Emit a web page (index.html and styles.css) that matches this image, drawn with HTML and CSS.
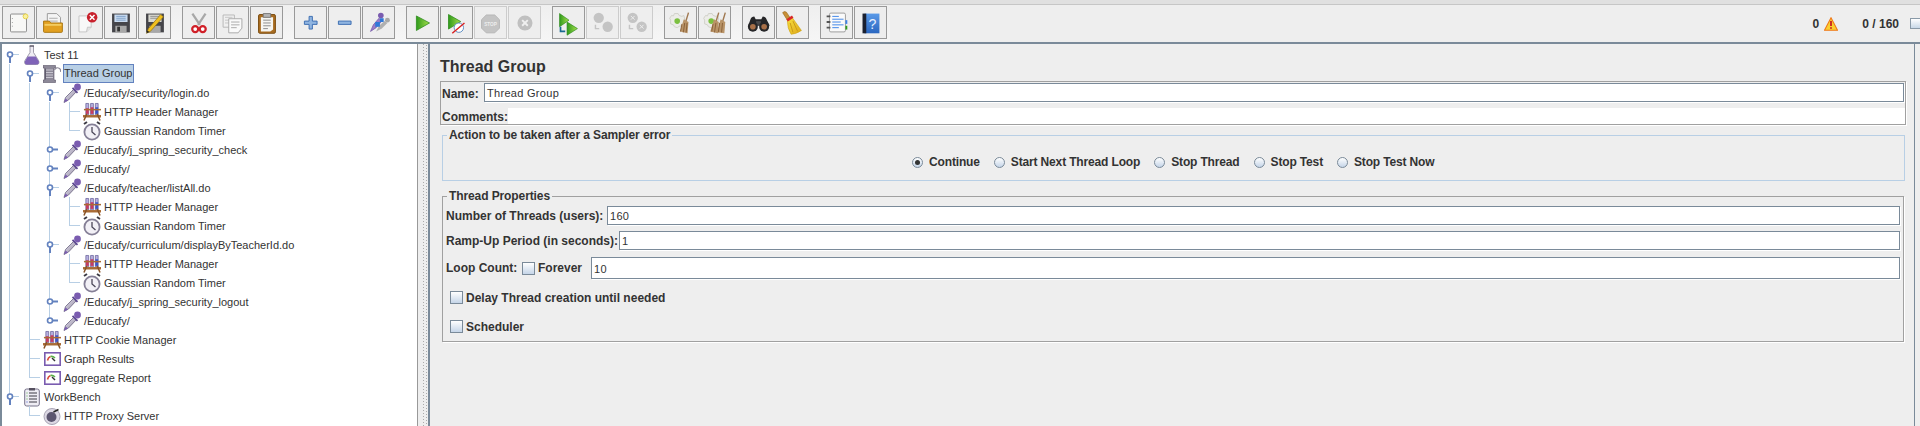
FILE: index.html
```html
<!DOCTYPE html>
<html lang="en">

<head>
    <meta charset="UTF-8">
    <title>Apache JMeter - Thread Group</title>
    <link rel="stylesheet" href="styles.css">
</head>

<body>

    <svg class="defs" width="0" height="0">
        <defs>
            <linearGradient id="glass" x1="0" y1="0" x2="1" y2="1">
                <stop offset="0" stop-color="#e8e4f0" />
                <stop offset="1" stop-color="#8f88a0" />
            </linearGradient>
            <linearGradient id="go" x1="0" y1="0" x2="1" y2="0">
                <stop offset="0" stop-color="#2f9a1c" />
                <stop offset="1" stop-color="#a8e04c" />
            </linearGradient>
            <linearGradient id="bluebook" x1="0" y1="0" x2="0" y2="1">
                <stop offset="0" stop-color="#5a9ae8" />
                <stop offset="1" stop-color="#2a66c0" />
            </linearGradient>
            <linearGradient id="straw" x1="0" y1="0" x2="1" y2="1">
                <stop offset="0" stop-color="#f6e040" />
                <stop offset="1" stop-color="#e0a818" />
            </linearGradient>
            <symbol id="h-open" viewBox="0 0 20 19">
                <path d="M10 12v6" stroke="#6382bf" stroke-width="2" />
                <path d="M13 9.500h6" stroke="#b8cfe5" />
                <circle cx="10" cy="9.500" r="2.500" fill="#fff" stroke="#6382bf" stroke-width="1.600" />
            </symbol>
            <symbol id="h-closed" viewBox="0 0 20 19">
                <path d="M13 9.500h5" stroke="#6382bf" stroke-width="2" />
                <circle cx="10" cy="9.500" r="2.500" fill="#fff" stroke="#6382bf" stroke-width="1.600" />
            </symbol>
            <symbol id="i-flask" viewBox="0 0 18 20">
                <path d="M7 1h3.500v6.500l5 8q1.500 4-2 4H4q-3.500 0-2-4l5-8z" fill="#efedf3" stroke="#8a8698" stroke-width=".8" />
                <path d="M4.800 11.500h7.900l3 4.800q.8 3.200-2 3.200H4q-2.800 0-2-3.200z" fill="#7f63b8" />
                <path d="M6.500 1h4.500" stroke="#55505f" stroke-width="1.200" />
            </symbol>
            <symbol id="i-spool" viewBox="0 0 18 20">
                <path d="M0 1.500h12.500v2.500H11v12h1.500v2.500H0V16h1.500V4H0z" fill="#8d8998" stroke="#5a5668" stroke-width=".6" />
                <path d="M2.500 6h7.500M2.500 8.500h7.500M2.500 11h7.500M2.500 13.500h7.500" stroke="#c8c6d0" />
                <path d="M2.500 4.500v11" stroke="#5f5b6c" />
                <path d="M11.500 6q2-3.500 5-1.500 1.500 1.200 1 3.500" fill="none" stroke="#8d8998" stroke-width="1.200" />
            </symbol>
            <symbol id="i-dropper" viewBox="0 0 18 20">
                <path d="M1 19.500l1.500-5L11 6l2.500 2.500-8 8.500z" fill="url(#glass)" stroke="#6b6480" stroke-width=".8" />
                <path d="M1 19.500l1.500-4 2.500 2z" fill="#7a5cb0" />
                <path d="M9.500 4.800l5 5" stroke="#5d4a90" stroke-width="1.800" />
                <circle cx="14.500" cy="4" r="3.400" fill="#7a5cb0" />
            </symbol>
            <symbol id="i-rack" viewBox="0 0 19 20">
                <path d="M3 1h3v12H3zM8 1h3v12H8zM13 1h3v12h-3z" fill="#b8b0e0" stroke="#5a5490" stroke-width=".7" />
                <path d="M3 6h3v6H3z" fill="#c83a60" />
                <path d="M8 5h3v7H8z" fill="#c83a60" />
                <path d="M13 5h3v7h-3z" fill="#3a56c8" />
                <path d="M1 7.500h18" stroke="#a96b35" stroke-width="1.600" />
                <path d="M0 14.500h19" stroke="#a96b35" stroke-width="2.600" />
                <path d="M4 12l-3 7M15 12l3 7" stroke="#8a5528" stroke-width="1.600" />
            </symbol>
            <symbol id="i-timer" viewBox="0 0 18 20">
                <path d="M1 3l3-2M17 3l-3-2" stroke="#3c3a44" stroke-width="2" />
                <circle cx="9" cy="11" r="7.600" fill="#f2f0f6" stroke="#857f96" stroke-width="1.800" />
                <path d="M9 6v5l3.500 3" fill="none" stroke="#4a4658" stroke-width="1.300" />
            </symbol>
            <symbol id="i-gauge" viewBox="0 0 18 20">
                <rect x="1.800" y="3.800" width="15.400" height="12.400" fill="#fff" stroke="#7a5cb0" stroke-width="1.600" />
                <path d="M4.500 11.500q.5-3 3-4" fill="none" stroke="#d84a3a" stroke-width="1.600" />
                <path d="M7.500 7.500q2.500-.5 4.500 1.500" fill="none" stroke="#5ab04a" stroke-width="1.600" />
                <path d="M9 9l3 3" stroke="#333" stroke-width="1.400" />
            </symbol>
            <symbol id="i-notes" viewBox="0 0 18 20">
                <rect x="1.700" y="2" width="14.600" height="17" rx="2" fill="#efedf4" stroke="#77728a" />
                <path d="M6 1h6v2.500H6z" fill="#55505f" />
                <path d="M6 6h8M6 9h8M6 12h8M6 15h8" stroke="#3c3a44" />
                <path d="M3.500 6h1M3.500 9h1M3.500 12h1" stroke="#5ab04a" />
                <path d="M3.500 15h1" stroke="#3a56c8" />
            </symbol>
            <symbol id="i-bomb" viewBox="0 0 18 20">
                <circle cx="9" cy="10.500" r="8" fill="#dcd8e4" stroke="#a8a4b4" />
                <circle cx="8.500" cy="11" r="5" fill="#5c5670" />
                <path d="M10.500 6l5-2.500" stroke="#222" stroke-width="1.500" />
            </symbol>
            <symbol id="i-gear" viewBox="0 0 33 33">
                <path d="M10 7h4l1 2 3 1 2-1 1 4-1 2 1 3-3 3-2-1-3 2-3-1-1-2-3-1v-4l-1-2 2-3 2 .5z" fill="#ecece8" stroke="#cfcfc8" />
                <circle cx="13" cy="15" r="3" fill="#7cc040" />
            </symbol>
        </defs>
    </svg>

    <div class="top-strip"></div>

    <div class="toolbar">
        <div class="tools">
            <div class="tool-group">
                <button class="tool"><svg viewBox="0 0 33 33">
                        <rect x="8" y="7.500" width="17" height="19" rx="1" fill="#f8f8f6" stroke="#8a8a8a" />
                        <path d="M10 12v.8M10 16v.8M10 20v.8" stroke="#888" />
                        <circle cx="24" cy="10" r="2.600" fill="#f8f0a0" stroke="#e8d040" />
                    </svg></button>
                <button class="tool"><svg viewBox="0 0 33 33">
                        <path d="M11 7h10l4 4v10H11z" fill="#f4f4f4" stroke="#999" />
                        <path d="M13 12h9M13 15h9" stroke="#aaa" />
                        <path d="M7 15h6l2 2h12v9q0 1-1 1H8q-1 0-1-1z" fill="#e2a020" stroke="#a87410" />
                        <path d="M8 19h18" stroke="#f4cc60" stroke-width="2" />
                    </svg></button>
                <button class="tool"><svg viewBox="0 0 33 33">
                        <path d="M8.500 9.500h13v12l-5 5h-8z" fill="#f8f8f8" stroke="#c4c4c4" />
                        <path d="M16.500 26.500l1-5h4" fill="#e4e4e4" stroke="#c4c4c4" />
                        <circle cx="22.500" cy="11" r="5.600" fill="#c8202c" />
                        <path d="M20 8.500l5 5M25 8.500l-5 5" stroke="#fff" stroke-width="1.600" />
                    </svg></button>
                <button class="tool"><svg viewBox="0 0 33 33">
                        <path d="M7.500 7h19v20h-19z" fill="#45454a" />
                        <path d="M10 8h14v8H10z" fill="#c9dbf0" />
                        <path d="M12 10h10M12 12h10M12 14h10" stroke="#7fa0c8" />
                        <path d="M11 20h12v7H11z" fill="#a8a8a8" />
                        <path d="M13 21h3v5h-3z" fill="#333" />
                    </svg></button>
                <button class="tool"><svg viewBox="0 0 33 33">
                        <path d="M7.500 7h19v20h-19z" fill="#45454a" />
                        <path d="M10 8h14v8H10z" fill="#d8d8d0" />
                        <path d="M12 10h10M12 12h10" stroke="#909090" />
                        <path d="M11 20h12v7H11z" fill="#a8a8a8" />
                        <path d="M8 28l2-5L23 8l3 2.500L12 26z" fill="#f0c020" stroke="#8a6a10" stroke-width=".7" />
                        <path d="M8 28l1-3 2 1.500z" fill="#222" />
                    </svg></button>
            </div>
            <div class="tool-group">
                <button class="tool"><svg viewBox="0 0 33 33">
                        <path d="M10 7l8 12M24 7l-8 12" stroke="#a8a8a8" stroke-width="2.400" />
                        <circle cx="13" cy="23.500" r="3.200" fill="#fff" stroke="#d02028" stroke-width="2.400" />
                        <circle cx="21" cy="23.500" r="3.200" fill="#fff" stroke="#d02028" stroke-width="2.400" />
                    </svg></button>
                <button class="tool"><svg viewBox="0 0 33 33">
                        <path d="M6.500 8.500h12v13h-12z" fill="#f0f0f0" stroke="#b8b8b8" />
                        <path d="M8.500 11h8M8.500 14h8M8.500 17h8" stroke="#c4c4c4" />
                        <path d="M12.500 12.500h14v10l-4 5h-10z" fill="#fafafa" stroke="#a8a8a8" />
                        <path d="M15 16h9M15 19h9M15 22h6" stroke="#a8a8a8" />
                    </svg></button>
                <button class="tool"><svg viewBox="0 0 33 33">
                        <rect x="8" y="8" width="18" height="20" rx="1.500" fill="#a86c20" stroke="#7a4c10" />
                        <path d="M10.500 11h13v13l-3 2h-10z" fill="#f6f6f2" />
                        <path d="M13 7h8v4h-8z" fill="#b4b4b4" stroke="#777" />
                        <path d="M13 14h8M13 17h8M13 20h8M13 23h5" stroke="#888" />
                    </svg></button>
            </div>
            <div class="tool-group">
                <button class="tool"><svg viewBox="0 0 33 33">
                        <path d="M15 10h3.500v5h5v3.500h-5v5H15v-5h-5V15h5z" fill="#8fb4e0" stroke="#3a6cb0" />
                    </svg></button>
                <button class="tool"><svg viewBox="0 0 33 33">
                        <path d="M10 15h13.500v3.500H10z" fill="#8fb4e0" stroke="#3a6cb0" />
                    </svg></button>
                <button class="tool"><svg viewBox="0 0 33 33">
                        <path d="M8 26l3-7 6-7 3 3-6 7z" fill="#9a7cc8" stroke="#6a4ca0" stroke-width=".7" />
                        <circle cx="19" cy="9" r="3" fill="#7a5cb0" />
                        <path d="M14 26l3-6 6-5 3 2-6 6z" fill="#b0b0b0" />
                        <circle cx="26" cy="14" r="2.600" fill="#a8a8a8" />
                        <path d="M13 16h5v5h-5zM18 12h4v4h-4z" fill="#2f78d8" />
                    </svg></button>
            </div>
            <div class="tool-group">
                <button class="tool"><svg viewBox="0 0 33 33">
                        <path d="M10 9.500l14 7.500-14 8z" fill="url(#go)" stroke="#2a8a18" stroke-width=".8" />
                    </svg></button>
                <button class="tool"><svg viewBox="0 0 33 33">
                        <path d="M8 8l13 7.500-13 8z" fill="url(#go)" stroke="#2a8a18" stroke-width=".8" />
                        <circle cx="19" cy="22" r="5" fill="#fff" stroke="#5a8ac0" />
                        <path d="M12 28l13-11" stroke="#d82020" stroke-width="1.500" />
                    </svg></button>
                <button class="tool off"><svg viewBox="0 0 33 33">
                        <path d="M12 8.500h9l5 5v9l-5 5h-9l-5-5v-9z" fill="#c4c4c4" stroke="#b4b4b4" />
                        <text x="16.500" y="20" class="stop-word">STOP</text>
                    </svg></button>
                <button class="tool off"><svg viewBox="0 0 33 33">
                        <circle cx="17" cy="17" r="8" fill="#c0c0c0" />
                        <path d="M14 14l6 6M20 14l-6 6" stroke="#f0f0f0" stroke-width="2" />
                    </svg></button>
            </div>
            <div class="tool-group">
                <button class="tool"><svg viewBox="0 0 33 33">
                        <path d="M7 7l10 7-10 7z" fill="url(#go)" stroke="#2a8a18" stroke-width=".7" />
                        <path d="M15 16l11 7-11 7z" fill="url(#go)" stroke="#2a8a18" stroke-width=".7" />
                        <path d="M8 21v5h5" fill="none" stroke="#1a6a90" stroke-width="1.800" />
                    </svg></button>
                <button class="tool off"><svg viewBox="0 0 33 33">
                        <circle cx="12.500" cy="11.500" r="5.500" fill="#c4c4c4" />
                        <circle cx="22" cy="21" r="5.500" fill="#c4c4c4" />
                        <path d="M9 19v4h4" fill="none" stroke="#c4c4c4" stroke-width="1.500" />
                    </svg></button>
                <button class="tool off"><svg viewBox="0 0 33 33">
                        <circle cx="12.500" cy="11.500" r="5.500" fill="#c4c4c4" />
                        <circle cx="22" cy="21" r="5.500" fill="#c4c4c4" />
                        <path d="M9 19v4h4" fill="none" stroke="#c4c4c4" stroke-width="1.500" />
                        <path d="M10.500 9.500l4 4M14.500 9.500l-4 4M20 19l4 4M24 19l-4 4" stroke="#eee" />
                    </svg></button>
            </div>
            <div class="tool-group">
                <button class="tool"><svg viewBox="0 0 33 33">
                        <use href="#i-gear" />
                        <path d="M25 6l-3 10" stroke="#a07850" stroke-width="1.500" />
                        <path d="M20 13l5 3-1 12-8-2z" fill="#b99468" />
                        <path d="M18 18l-1.500 8M21 17l-1.500 10M23.500 17l-1 10" stroke="#8a6038" />
                    </svg></button>
                <button class="tool"><svg viewBox="0 0 33 33">
                        <use href="#i-gear" />
                        <path d="M21 6l-3 10M28 6l-3 10" stroke="#a07850" stroke-width="1.500" />
                        <path d="M16 13l5 3-1 12-8-2z" fill="#b99468" />
                        <path d="M23 13l5 3-1 12-8-1z" fill="#b99468" />
                        <path d="M15 18l-1.500 8M18 17l-1.500 10M22 17l-1.500 10M25 17l-1 10" stroke="#8a6038" />
                    </svg></button>
            </div>
            <div class="tool-group">
                <button class="tool"><svg viewBox="0 0 33 33">
                        <path d="M8 13q1-3 4-3l1.500 3h6L21 10q3 0 4 3l3.500 7h-23z" fill="#262628" />
                        <path d="M14 15h5v4h-5z" fill="#4a4a4c" />
                        <circle cx="10.500" cy="21" r="5.300" fill="#262628" />
                        <circle cx="22.500" cy="21" r="5.300" fill="#262628" />
                        <circle cx="10.500" cy="21" r="3" fill="#a87048" />
                        <circle cx="22.500" cy="21" r="3" fill="#a87048" />
                    </svg></button>
                <button class="tool"><svg viewBox="0 0 33 33">
                        <path d="M6 6q2-2 4-.5l4 6-3 2.500z" fill="#c89038" stroke="#906010" stroke-width=".6" />
                        <path d="M11 14l5-3 10 14q-6 4-11 4-4-6-4-15z" fill="url(#straw)" stroke="#c8a010" stroke-width=".6" />
                        <path d="M10 13l6-4 1.500 2.500-6 4z" fill="#d82828" />
                        <path d="M14 17l3 10M17 15l5 11" stroke="#c89818" />
                    </svg></button>
            </div>
            <div class="tool-group">
                <button class="tool"><svg viewBox="0 0 33 33">
                        <rect x="9" y="6.500" width="17" height="20" rx="1.500" fill="#fafafa" stroke="#9a9a9a" />
                        <path d="M12 10h7M12 13h12M12 16h9M12 19h12M12 22h7" stroke="#3a82e8" />
                        <path d="M6 10h4M6 16h4M6 22h4" stroke="#555" stroke-width="2" />
                        <path d="M26 14h2v4h-2z" fill="#3a82e8" />
                        <path d="M26 20h2v4h-2z" fill="#2f9a1c" />
                    </svg></button>
                <button class="tool"><svg viewBox="0 0 33 33">
                        <path d="M10 7h16v21H10z" fill="url(#bluebook)" />
                        <path d="M8 7h4v21H8z" fill="#1a2030" />
                        <text x="18.500" y="23" class="help-mark">?</text>
                    </svg></button>
            </div>
        </div>

        <div class="status">
            <span>0</span>
            <svg class="warn" viewBox="0 0 14 14">
                <path d="M7 .8l6.500 12.400H.5z" fill="#fad030" stroke="#f07818" stroke-width="1.100" />
                <path d="M7 4v5" stroke="#c82020" stroke-width="1.800" />
                <path d="M7 10.200v1.600" stroke="#c82020" stroke-width="1.800" />
            </svg>
            <span class="active-count">0 / 160</span>
            <span class="status-box"></span>
        </div>
    </div>

    <div class="main">

        <div class="tree">
            <div class="row"><span class="cell"><svg class="handle"><use href="#h-open" /></svg></span><svg class="icon"><use href="#i-flask" /></svg><span class="label">Test 11</span></div>
            <div class="row"><span class="cell v"></span><span class="cell"><svg class="handle"><use href="#h-open" /></svg></span><svg class="icon"><use href="#i-spool" /></svg><span class="label selected">Thread Group</span></div>
            <div class="row"><span class="cell v"></span><span class="cell v"></span><span class="cell"><svg class="handle"><use href="#h-open" /></svg></span><svg class="icon"><use href="#i-dropper" /></svg><span class="label">/Educafy/security/login.do</span></div>
            <div class="row"><span class="cell v"></span><span class="cell v"></span><span class="cell v"></span><span class="cell v stub"></span><svg class="icon"><use href="#i-rack" /></svg><span class="label">HTTP Header Manager</span></div>
            <div class="row"><span class="cell v"></span><span class="cell v"></span><span class="cell v"></span><span class="cell up stub"></span><svg class="icon"><use href="#i-timer" /></svg><span class="label">Gaussian Random Timer</span></div>
            <div class="row"><span class="cell v"></span><span class="cell v"></span><span class="cell v"><svg class="handle"><use href="#h-closed" /></svg></span><svg class="icon"><use href="#i-dropper" /></svg><span class="label">/Educafy/j_spring_security_check</span></div>
            <div class="row"><span class="cell v"></span><span class="cell v"></span><span class="cell v"><svg class="handle"><use href="#h-closed" /></svg></span><svg class="icon"><use href="#i-dropper" /></svg><span class="label">/Educafy/</span></div>
            <div class="row"><span class="cell v"></span><span class="cell v"></span><span class="cell v"><svg class="handle"><use href="#h-open" /></svg></span><svg class="icon"><use href="#i-dropper" /></svg><span class="label">/Educafy/teacher/listAll.do</span></div>
            <div class="row"><span class="cell v"></span><span class="cell v"></span><span class="cell v"></span><span class="cell v stub"></span><svg class="icon"><use href="#i-rack" /></svg><span class="label">HTTP Header Manager</span></div>
            <div class="row"><span class="cell v"></span><span class="cell v"></span><span class="cell v"></span><span class="cell up stub"></span><svg class="icon"><use href="#i-timer" /></svg><span class="label">Gaussian Random Timer</span></div>
            <div class="row"><span class="cell v"></span><span class="cell v"></span><span class="cell v"><svg class="handle"><use href="#h-open" /></svg></span><svg class="icon"><use href="#i-dropper" /></svg><span class="label">/Educafy/curriculum/displayByTeacherId.do</span></div>
            <div class="row"><span class="cell v"></span><span class="cell v"></span><span class="cell v"></span><span class="cell v stub"></span><svg class="icon"><use href="#i-rack" /></svg><span class="label">HTTP Header Manager</span></div>
            <div class="row"><span class="cell v"></span><span class="cell v"></span><span class="cell v"></span><span class="cell up stub"></span><svg class="icon"><use href="#i-timer" /></svg><span class="label">Gaussian Random Timer</span></div>
            <div class="row"><span class="cell v"></span><span class="cell v"></span><span class="cell v"><svg class="handle"><use href="#h-closed" /></svg></span><svg class="icon"><use href="#i-dropper" /></svg><span class="label">/Educafy/j_spring_security_logout</span></div>
            <div class="row"><span class="cell v"></span><span class="cell v"></span><span class="cell up"><svg class="handle"><use href="#h-closed" /></svg></span><svg class="icon"><use href="#i-dropper" /></svg><span class="label">/Educafy/</span></div>
            <div class="row"><span class="cell v"></span><span class="cell v stub"></span><svg class="icon"><use href="#i-rack" /></svg><span class="label">HTTP Cookie Manager</span></div>
            <div class="row"><span class="cell v"></span><span class="cell v stub"></span><svg class="icon"><use href="#i-gauge" /></svg><span class="label">Graph Results</span></div>
            <div class="row"><span class="cell v"></span><span class="cell up stub"></span><svg class="icon"><use href="#i-gauge" /></svg><span class="label">Aggregate Report</span></div>
            <div class="row"><span class="cell up"><svg class="handle"><use href="#h-open" /></svg></span><svg class="icon"><use href="#i-notes" /></svg><span class="label">WorkBench</span></div>
            <div class="row"><span class="cell"></span><span class="cell up stub"></span><svg class="icon"><use href="#i-bomb" /></svg><span class="label">HTTP Proxy Server</span></div>
        </div>

        <div class="splitter"></div>

        <div class="panel">
            <h1 class="title">Thread Group</h1>

            <div class="name-box">
                <div class="name-row">
                    <span class="bold name-label">Name:</span>
                    <div class="field">Thread Group</div>
                </div>
                <div class="comment-row">
                    <span class="bold comment-label">Comments:</span>
                    <div class="comment-area"></div>
                </div>
            </div>

            <fieldset class="group action-group">
                <legend class="bold">Action to be taken after a Sampler error</legend>
                <div class="radios">
                    <span class="radio checked"></span><span class="bold radio-text">Continue</span>
                    <span class="radio"></span><span class="bold radio-text">Start Next Thread Loop</span>
                    <span class="radio"></span><span class="bold radio-text">Stop Thread</span>
                    <span class="radio"></span><span class="bold radio-text">Stop Test</span>
                    <span class="radio"></span><span class="bold radio-text">Stop Test Now</span>
                </div>
            </fieldset>

            <fieldset class="group props-group">
                <legend class="bold">Thread Properties</legend>
                <div class="prop-row first-row">
                    <span class="bold threads-label">Number of Threads (users):</span>
                    <div class="field">160</div>
                </div>
                <div class="prop-row ramp-row">
                    <span class="bold ramp-label">Ramp-Up Period (in seconds):</span>
                    <div class="field">1</div>
                </div>
                <div class="prop-row loop-row">
                    <span class="bold loop-label">Loop Count:</span>
                    <span class="check"></span>
                    <span class="bold forever-label">Forever</span>
                    <div class="field">10</div>
                </div>
                <div class="check-row delay-row">
                    <span class="check"></span>
                    <span class="bold">Delay Thread creation until needed</span>
                </div>
                <div class="check-row sched-row">
                    <span class="check"></span>
                    <span class="bold">Scheduler</span>
                </div>
            </fieldset>
        </div>
    </div>

</body>

</html>
```

FILE: styles.css
```css
html,
body {
    margin: 0;
    height: 426px;
    overflow: hidden;
}

body {
    background: #eeeeee;
    color: #333333;
    font-family: "Liberation Sans", Arial, sans-serif;
    font-size: 12px;
}

.defs {
    display: block;
    height: 0;
}

.bold {
    font-weight: bold;
}

/* top */

.top-strip {
    height: 4px;
    background: #e0e0e0;
    border-bottom: 1px solid #c6c6c6;
}

.toolbar {
    display: flex;
    align-items: flex-start;
    height: 37px;
}

.tools {
    display: flex;
    height: 37px;
    box-sizing: border-box;
    padding: 1px 0 0 2px;
    background: linear-gradient(#efefef, #f6f6f6);
}

.tool-group {
    display: flex;
    gap: 1px;
    margin-right: 11px;
}

.tool-group:last-child {
    margin-right: 3px;
}

.tool {
    width: 33px;
    height: 33px;
    padding: 0;
    background: #eeeeee;
    border: 1px solid #999999;
    display: block;
}

.tool.off {
    border-color: #cccccc;
}

.tool svg {
    display: block;
    width: 31px;
    height: 31px;
}

.stop-word {
    font-size: 5px;
    font-weight: bold;
    fill: #eeeeee;
    text-anchor: middle;
}

.help-mark {
    font-size: 15px;
    fill: #e8f0ff;
    text-anchor: middle;
}

.status {
    margin-left: auto;
    display: flex;
    align-items: center;
    height: 37px;
    font-weight: bold;
    margin-right: -4px;
}

.warn {
    width: 14px;
    height: 14px;
    margin-left: 5px;
}

.active-count {
    margin-left: 24px;
}

.status-box {
    width: 12px;
    height: 9px;
    margin-left: 11px;
    border: 1px solid #8a9aa8;
    background: linear-gradient(#ffffff, #c8d8e8);
}

/* tree */

.main {
    display: flex;
    height: 384px;
    border-top: 2px solid #7a8a99;
}

.tree {
    width: 415px;
    margin-left: 2px;
    background: #ffffff;
    border-right: 1px solid #999999;
    box-shadow: -2px 0 0 #7a8a99;
    overflow: hidden;
    flex: none;
    padding-top: 1px;
    font-size: 11px;
}

.row {
    display: flex;
    align-items: center;
    height: 19px;
    margin-left: -2px;
}

.cell {
    width: 20px;
    height: 19px;
    position: relative;
    flex: none;
}

.v::before,
.up::before {
    content: "";
    position: absolute;
    left: 9px;
    top: 0;
    bottom: 0;
    width: 1px;
    background: #b8cfe5;
}

.up::before {
    bottom: 9px;
}

.stub::after {
    content: "";
    position: absolute;
    left: 9px;
    top: 9px;
    width: 11px;
    height: 1px;
    background: #b8cfe5;
}

.handle {
    position: absolute;
    left: 0;
    top: 0;
    width: 20px;
    height: 19px;
}

.icon {
    width: 18px;
    height: 20px;
    margin-left: 3px;
    flex: none;
}

.label {
    margin-left: 2px;
    padding: 0 1px;
    line-height: 18px;
    white-space: nowrap;
}

.selected {
    background: #b8cfe5;
    border: 1px solid #6382bf;
    padding: 0 1px 0 0;
    line-height: 17px;
}

/* splitter */

.splitter {
    width: 10px;
    flex: none;
    background-image: repeating-linear-gradient(#aaaaaa 0 1px, transparent 1px 3px), repeating-linear-gradient(#aaaaaa 0 1px, transparent 1px 3px);
    background-size: 1px 100%, 1px 100%;
    background-position: 5px 0, 8px 1px;
    background-repeat: no-repeat;
}

/* right panel */

.panel {
    width: 1487px;
    flex: none;
    box-sizing: border-box;
    border-left: 2px solid #7a8a99;
    border-right: 1px solid #7a8a99;
    padding-left: 10px;
}

.title {
    margin: 14px 0 5px;
    font-size: 16px;
    line-height: 18px;
    font-weight: bold;
}

.name-box {
    width: 1466px;
    box-sizing: border-box;
    height: 44px;
    padding: 1px 0 0 0;
    border: 1px solid #a0a0a0;
    box-shadow: 1px 1px 0 #ffffff;
}

.name-row,
.comment-row,
.prop-row,
.check-row {
    display: flex;
    align-items: center;
}

.name-row {
    padding-right: 1px;
}

.name-label {
    width: 42px;
    margin-left: 1px;
    padding-top: 2px;
    flex: none;
}

.comment-row {
    margin-top: 6px;
    height: 16px;
}

.comment-label {
    width: 66px;
    margin-left: 1px;
    padding-top: 2px;
    flex: none;
}

.comment-area {
    flex: 1;
    height: 16px;
    background: #ffffff;
}

.field {
    flex: 1;
    height: 19px;
    line-height: 19px;
    box-sizing: border-box;
    padding-left: 2px;
    border: 1px solid #7a8a99;
    background: #ffffff;
    box-shadow: 1px 1px 0 #ffffff;
    font-size: 11px;
    letter-spacing: .3px;
}

.group {
    margin: 0 0 0 2px;
    padding: 0 3px;
    min-width: 0;
    box-sizing: border-box;
}

.group legend {
    margin-left: 1px;
    padding: 0 2px;
    line-height: 16px;
    letter-spacing: -.1px;
}

.action-group {
    width: 1463px;
    margin-top: 2px;
    border: 1px solid #b8cfe5;
    padding-bottom: 11px;
}

.radios {
    display: flex;
    align-items: center;
    height: 14px;
    margin-top: 12px;
    padding-left: 466px;
}

.radio {
    width: 11px;
    height: 11px;
    box-sizing: border-box;
    flex: none;
    border: 1px solid #7a8a99;
    border-radius: 50%;
    background: linear-gradient(#ffffff, #c5d5e8);
    position: relative;
}

.checked::after {
    content: "";
    position: absolute;
    left: 2px;
    top: 2px;
    width: 5px;
    height: 5px;
    border-radius: 50%;
    background: #333333;
}

.radio-text {
    margin-left: 6px;
    margin-right: 14px;
    white-space: nowrap;
    letter-spacing: -.15px;
}

.props-group {
    width: 1462px;
    height: 154px;
    margin-top: 7px;
    border: 1px solid #a0a0a0;
    box-shadow: 1px 1px 0 #ffffff;
}

.prop-row {
    height: 19px;
}

.first-row {
    margin-top: 2px;
}

.ramp-row {
    margin-top: 6px;
}

.loop-row {
    margin-top: 7px;
    height: 22px;
}

.loop-row .field {
    height: 22px;
    line-height: 22px;
}

.threads-label {
    width: 161px;
    flex: none;
}

.ramp-label {
    width: 173px;
    flex: none;
}

.loop-label {
    width: 76px;
    flex: none;
}

.forever-label {
    width: 53px;
    margin-left: 3px;
    flex: none;
}

.check {
    width: 13px;
    height: 13px;
    box-sizing: border-box;
    flex: none;
    border: 1px solid #7a8a99;
    background: linear-gradient(#ffffff, #c5d5e8);
}

.check-row {
    height: 15px;
    padding-left: 4px;
    gap: 3px;
}

.delay-row {
    margin-top: 11px;
}

.sched-row {
    margin-top: 14px;
}
```
